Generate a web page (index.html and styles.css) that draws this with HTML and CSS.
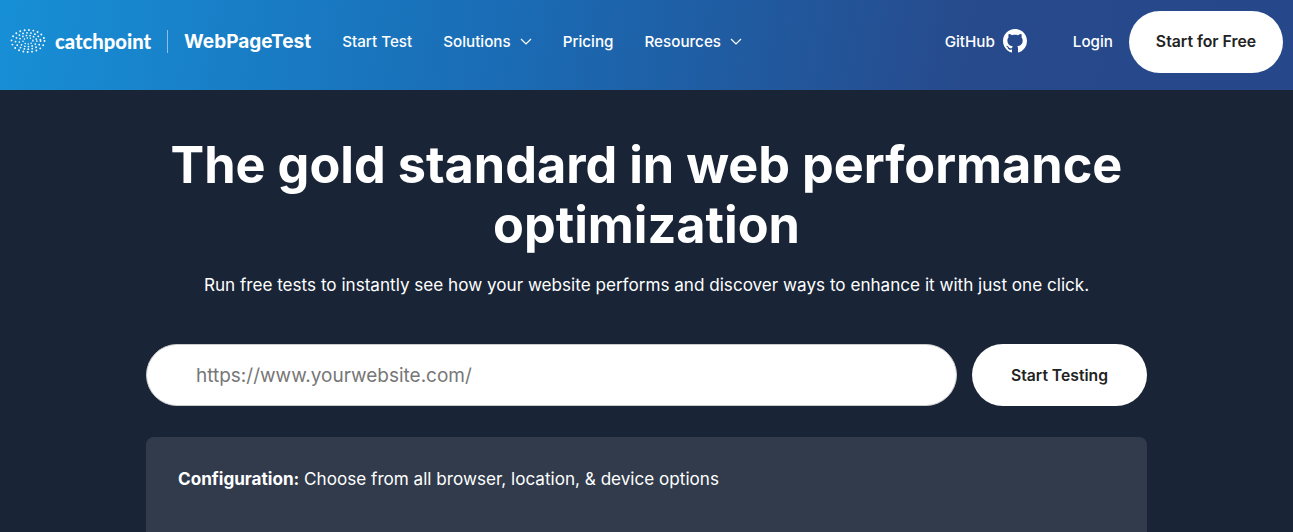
FILE: index.html
```html
<!DOCTYPE html>
<html>
<head>
  <title>WebPageTest</title>
  <meta charset="UTF-8">
  <meta name="viewport" content="width=device-width, initial-scale=1.0">
  <link rel="stylesheet" href="styles.css">
</head>
<body>
  <header class="nav">
    <a class="brand" href="#">
      <svg class="brand-mark" width="36" height="26" viewBox="0 0 36 26" fill="none" stroke="#fff" stroke-linecap="round">
        <ellipse cx="18" cy="13" rx="16.5" ry="11" stroke-width="1.9" stroke-dasharray="0 4.4"/>
        <ellipse cx="18" cy="13" rx="12.5" ry="8.2" stroke-width="1.8" stroke-dasharray="0 4"/>
        <ellipse cx="18" cy="13" rx="8.8" ry="5.6" stroke-width="1.7" stroke-dasharray="0 3.6"/>
        <ellipse cx="18" cy="13" rx="5" ry="3" stroke-width="1.5" stroke-dasharray="0 3"/>
      </svg>
      <span class="brand-catchpoint">catchpoint</span>
      <span class="brand-divider"></span>
      <span class="brand-wpt">WebPageTest</span>
    </a>
    <nav class="nav-links">
      <a href="#">Start Test</a>
      <a href="#">Solutions
        <svg class="chevron" width="12" height="7" viewBox="0 0 12 7" fill="none" stroke="#fff" stroke-width="1.2"><path d="M1 1l5 5 5-5"/></svg>
      </a>
      <a href="#">Pricing</a>
      <a href="#">Resources
        <svg class="chevron" width="12" height="7" viewBox="0 0 12 7" fill="none" stroke="#fff" stroke-width="1.2"><path d="M1 1l5 5 5-5"/></svg>
      </a>
    </nav>
    <div class="nav-right">
      <a class="github" href="#">GitHub
        <svg width="24" height="24" viewBox="0 0 16 16" fill="#fff"><path d="M8 0C3.58 0 0 3.58 0 8c0 3.54 2.29 6.53 5.47 7.59.4.07.55-.17.55-.38 0-.19-.01-.82-.01-1.49-2.01.37-2.53-.49-2.69-.94-.09-.23-.48-.94-.82-1.13-.28-.15-.68-.52-.01-.53.63-.01 1.08.58 1.23.82.72 1.21 1.87.87 2.33.66.07-.52.28-.87.51-1.07-1.78-.2-3.64-.89-3.64-3.95 0-.87.31-1.59.82-2.15-.08-.2-.36-1.02.08-2.12 0 0 .67-.21 2.2.82.64-.18 1.32-.27 2-.27s1.36.09 2 .27c1.53-1.04 2.2-.82 2.2-.82.44 1.1.16 1.92.08 2.12.51.56.82 1.27.82 2.15 0 3.07-1.87 3.75-3.65 3.95.29.25.54.73.54 1.48 0 1.07-.01 1.93-.01 2.2 0 .21.15.46.55.38A8.01 8.01 0 0 0 16 8c0-4.42-3.58-8-8-8z"/></svg>
      </a>
      <a class="login" href="#">Login</a>
      <a class="btn btn-free" href="#">Start for Free</a>
    </div>
  </header>

  <main class="hero">
    <h1>The gold standard in web performance optimization</h1>
    <p class="lead">Run free tests to instantly see how your website performs and discover ways to enhance it with just one click.</p>
    <form class="test-form">
      <input class="url-input" type="text" placeholder="https://www.yourwebsite.com/">
      <button class="btn btn-test" type="button">Start Testing</button>
    </form>
    <section class="config">
      <p><strong>Configuration:</strong> Choose from all browser, location, &amp; device options</p>
    </section>
  </main>
</body>
</html>
```

FILE: styles.css
```css
html, body {
  height: 100%;
}
body {
  margin: 0;
  overflow: hidden;
  background-color: #192537;
  color: #fff;
  font-family: "Inter", "Liberation Sans", sans-serif;
}
a {
  color: #fff;
  text-decoration: none;
}
.nav {
  display: flex;
  align-items: center;
  height: 90px;
  padding: 0 10px 8px;
  box-sizing: border-box;
  background: linear-gradient(100deg, #178fd6 0%, #1a6bb4 40%, #274a8c 75%, #26488a 100%);
}
.brand {
  display: flex;
  align-items: center;
}
.brand-mark {
  margin-right: 9px;
}
.brand-catchpoint {
  font-family: "Lato", sans-serif;
  font-size: 20.2px;
  font-weight: 900;
}
.brand-divider {
  width: 1px;
  height: 23px;
  margin: 0 16px;
  background-color: rgba(255, 255, 255, 0.5);
}
.brand-wpt {
  font-size: 19px;
  font-weight: 700;
}
.nav-links {
  display: flex;
  align-items: center;
  gap: 31px;
  margin-left: 31px;
  font-size: 15.2px;
  font-weight: 500;
}
.chevron {
  margin-left: 5px;
  vertical-align: 2px;
}
.nav-right {
  display: flex;
  align-items: center;
  margin-left: auto;
  font-size: 15.2px;
  font-weight: 500;
}
.github {
  display: flex;
  align-items: center;
  gap: 8px;
  margin-right: 46px;
}
.login {
  margin-right: 16px;
}
.btn {
  border: none;
  border-radius: 31px;
  background-color: #fff;
  color: #222;
  font-family: inherit;
  font-weight: 600;
  cursor: pointer;
}
.btn-free {
  width: 154px;
  margin-top: 2px;
  padding: 21px 0;
  font-size: 15.8px;
  line-height: 20px;
  text-align: center;
}
.hero {
  display: flex;
  flex-direction: column;
  align-items: center;
  padding-top: 45px;
}
h1 {
  max-width: 1000px;
  margin: 0;
  font-size: 50.4px;
  font-weight: 700;
  line-height: 59.5px;
  text-align: center;
}
.lead {
  margin: 18px 0 0;
  font-size: 17.12px;
  line-height: 26px;
}
.test-form {
  display: flex;
  gap: 15px;
  width: 1001px;
  margin-top: 46px;
}
.url-input {
  flex: 1;
  height: 62px;
  padding: 0 49px;
  box-sizing: border-box;
  border: 1px solid #ccc;
  border-radius: 31px;
  background-color: #fff;
  font-family: inherit;
  font-size: 19px;
}
.url-input::placeholder {
  color: #777;
  opacity: 1;
}
.btn-test {
  width: 175px;
  height: 62px;
  font-size: 15.7px;
}
.config {
  width: 1001px;
  height: 200px;
  margin-top: 31px;
  padding: 31px 32px;
  box-sizing: border-box;
  border-radius: 8px;
  background-color: #313b4b;
}
.config p {
  margin: 0;
  font-size: 17.12px;
  line-height: 22px;
}
.config strong {
  font-weight: 700;
}
```
